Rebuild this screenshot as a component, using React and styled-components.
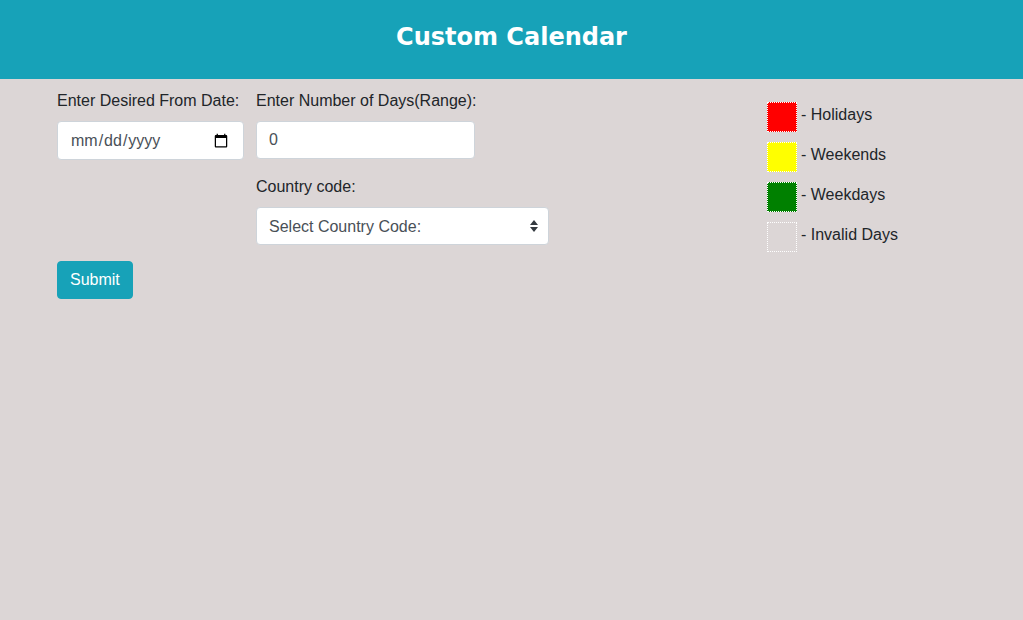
import styled, { createGlobalStyle } from 'styled-components';

const GlobalStyle = createGlobalStyle`
  html, body {
    margin: 0;
    padding: 0;
    background: #dcd6d6;
    font-family: "Liberation Sans", Arial, sans-serif;
    color: #212529;
  }
  * { box-sizing: border-box; }
`;

const Header = styled.header`
  height: 79px;
  padding-bottom: 6px;
  background: #17a2b8;
  display: flex;
  align-items: center;
  justify-content: center;
`;

const Title = styled.h1`
  margin: 0;
  color: #fff;
  font-family: "Comic Sans MS", "DejaVu Sans", sans-serif;
  font-size: 24px;
  font-weight: bold;
`;

const Main = styled.main`
  display: flex;
  padding: 10px 0 0 57px;
`;

const FormArea = styled.form`
  display: flex;
  flex-direction: column;
  width: 710px;
`;

const Row = styled.div`
  display: flex;
  gap: 12px;
`;

const Column = styled.div`
  display: flex;
  flex-direction: column;
  width: ${(p) => p.$width}px;
`;

const Group = styled.div`
  display: flex;
  flex-direction: column;
  margin-bottom: 16px;
`;

const Label = styled.label`
  font-size: 16px;
  line-height: 24px;
  margin-bottom: 8px;
  white-space: nowrap;
`;

const Input = styled.input`
  width: ${(p) => p.$width}px;
  height: ${(p) => p.$height || 38}px;
  padding: 6px 12px;
  font-size: 16px;
  font-family: "Liberation Sans", Arial, sans-serif;
  color: #495057;
  background: #fff;
  border: 1px solid #ced4da;
  border-radius: 4px;
  outline: none;
`;

const Select = styled.select`
  width: 293px;
  height: 38px;
  padding: 6px 12px;
  font-size: 16px;
  font-family: "Liberation Sans", Arial, sans-serif;
  color: #495057;
  background: #fff;
  border: 1px solid #ced4da;
  border-radius: 4px;
  appearance: none;
  outline: none;
`;

const SelectWrap = styled.div`
  position: relative;
  width: 293px;
`;

const Arrows = styled.svg`
  position: absolute;
  right: 11px;
  top: 13px;
  pointer-events: none;
`;

const SubmitButton = styled.button`
  align-self: flex-start;
  height: 38px;
  padding: 6px 12px;
  font-size: 16px;
  font-family: "Liberation Sans", Arial, sans-serif;
  color: #fff;
  background: #17a2b8;
  border: 1px solid #17a2b8;
  border-radius: 4px;
  cursor: pointer;
`;

const Legend = styled.div`
  display: flex;
  flex-direction: column;
  gap: 10px;
  margin-top: 13px;
`;

const LegendItem = styled.div`
  display: flex;
  align-items: center;
  gap: 4px;
  font-size: 16px;
  line-height: 24px;
`;

const Swatch = styled.span`
  width: 30px;
  height: 30px;
  background: ${(p) => p.$color};
  border: 1px dotted #fff;
`;

const LegendText = styled.span`
  margin-top: -5px;
`;

const legend = [
  { color: '#ff0000', label: '- Holidays' },
  { color: '#ffff00', label: '- Weekends' },
  { color: '#008000', label: '- Weekdays' },
  { color: 'transparent', label: '- Invalid Days' },
];

const App = () => (
  <>
    <GlobalStyle />
    <Header>
      <Title>Custom Calendar</Title>
    </Header>
    <Main>
      <FormArea onSubmit={(e) => e.preventDefault()}>
        <Row>
          <Column $width={187}>
            <Group>
              <Label htmlFor="fromDate">Enter Desired From Date:</Label>
              <Input id="fromDate" type="date" $width={187} $height={39} />
            </Group>
          </Column>
          <Column $width={300}>
            <Group>
              <Label htmlFor="range">Enter Number of Days(Range):</Label>
              <Input id="range" type="number" defaultValue={0} $width={219} />
            </Group>
            <Group>
              <Label htmlFor="country">Country code:</Label>
              <SelectWrap>
                <Select id="country" defaultValue="">
                  <option value="">Select Country Code:</option>
                </Select>
                <Arrows width="8" height="12" viewBox="0 0 8 12">
                  <path d="M4 0 L8 5 H0 Z M0 7 H8 L4 12 Z" fill="#343a40" />
                </Arrows>
              </SelectWrap>
            </Group>
          </Column>
        </Row>
        <SubmitButton type="submit">Submit</SubmitButton>
      </FormArea>
      <Legend>
        {legend.map((item) => (
          <LegendItem key={item.label}>
            <Swatch $color={item.color} />
            <LegendText>{item.label}</LegendText>
          </LegendItem>
        ))}
      </Legend>
    </Main>
  </>
);

export default App;
